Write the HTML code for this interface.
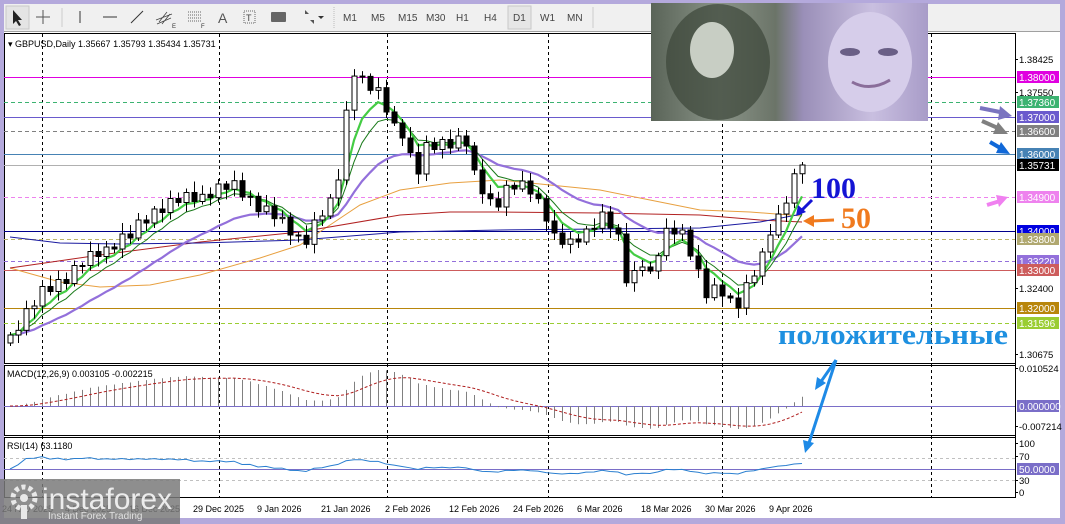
<!DOCTYPE html>
<html><head><meta charset="utf-8">
<style>
html,body{margin:0;padding:0;width:1065px;height:524px;overflow:hidden;background:#b4a9dc;font-family:"Liberation Sans",sans-serif;}
svg{display:block}
</style></head><body>
<svg id="s" width="1065" height="524" xmlns="http://www.w3.org/2000/svg" font-family="Liberation Sans, sans-serif">
<defs>
<linearGradient id="pg" x1="0" x2="1" y1="0" y2="0">
<stop offset="0" stop-color="#5a6458"/><stop offset="0.25" stop-color="#8a9488"/><stop offset="0.45" stop-color="#6b7468"/><stop offset="0.55" stop-color="#9a8fb8"/><stop offset="0.8" stop-color="#c9bfe0"/><stop offset="1" stop-color="#a89cc8"/>
</linearGradient>
</defs>
<rect x="0" y="0" width="1065" height="524" fill="#b4a9dc"/>
<rect x="4" y="4" width="1056" height="27" fill="#f0f0f0"/>
<line x1="4" y1="31.5" x2="1060" y2="31.5" stroke="#a0a0a0"/>
<rect x="6" y="6" width="23" height="23" fill="#e4e4e4" stroke="#c8c8c8"/>
<path d="M13,10 L13,24 L16,21 L19,26 L21,25 L18,20 L22,20 Z" fill="#222"/>
<path d="M36,17 H50 M43,10 V24" stroke="#555" stroke-width="1"/>
<line x1="62" y1="8" x2="62" y2="27" stroke="#ccc"/>
<line x1="80" y1="11" x2="80" y2="23" stroke="#333"/>
<line x1="103" y1="17" x2="117" y2="17" stroke="#333"/>
<line x1="131" y1="23" x2="143" y2="11" stroke="#333"/>
<path d="M159,22 L167,12 M162,24 L170,14 M156,20 L172,14 M157,24 L171,18" stroke="#444" stroke-width="0.8"/><text x="172" y="28" font-size="6" fill="#333">E</text>
<path d="M188,12 H202 M188,15 H202 M188,18 H202 M188,21 H202" stroke="#666" stroke-dasharray="1,1"/><text x="201" y="28" font-size="6" fill="#333">F</text>
<text x="218" y="23" font-size="14" fill="#555">A</text>
<rect x="244" y="11" width="11" height="12" fill="none" stroke="#666" stroke-dasharray="1,1"/><text x="246" y="21" font-size="9" fill="#444">T</text>
<rect x="271" y="12" width="15" height="10" rx="1" fill="#666"/>
<path d="M305,10 L309,14 L305,14 Z M310,20 L314,24 L314,20 Z" fill="#555"/><path d="M318,16 L324,16 L321,19 Z" fill="#333"/>
<line x1="334" y1="7" x2="334" y2="28" stroke="#bbb" stroke-dasharray="1,1"/>
<g font-size="10" fill="#444">
<text x="343" y="21">M1</text><text x="371" y="21">M5</text><text x="398" y="21">M15</text><text x="426" y="21">M30</text><text x="456" y="21">H1</text><text x="484" y="21">H4</text>
<rect x="508" y="6" width="23" height="23" fill="#e6e6e6" stroke="#c8c8c8"/><text x="513" y="21">D1</text>
<text x="540" y="21">W1</text><text x="567" y="21">MN</text>
</g>
<line x1="593" y1="7" x2="593" y2="28" stroke="#ccc"/>
<rect x="4" y="32" width="1056" height="486" fill="#ffffff"/>
<g id="grid"></g>
<rect x="4.5" y="33.5" width="1011" height="330" fill="none" stroke="#000"/>
<rect x="4.5" y="365.5" width="1011" height="70" fill="none" stroke="#000"/>
<rect x="4.5" y="437.5" width="1011" height="60" fill="none" stroke="#000"/>
<g id="hl"></g>
<g id="ma"></g>
<g id="cd"></g>
<g id="ind"></g>
<g id="lbl"></g>
<text x="8" y="47" font-size="9" fill="#000">▾ GBPUSD,Daily  1.35667 1.35793 1.35434 1.35731</text>
<text x="7" y="377" font-size="9" fill="#000">MACD(12,26,9) 0.003105 -0.002215</text>
<text x="7" y="449" font-size="9" fill="#000">RSI(14) 63.1180</text>
<rect x="651" y="3" width="277" height="118" fill="url(#pg)"/>
<ellipse cx="718" cy="62" rx="52" ry="58" fill="#3c4639" opacity="0.7"/>
<ellipse cx="712" cy="50" rx="22" ry="28" fill="#c8cec4"/>
<ellipse cx="870" cy="62" rx="42" ry="50" fill="#d6cdea"/>
<ellipse cx="850" cy="52" rx="10" ry="4" fill="#6a5f86"/><ellipse cx="888" cy="52" rx="10" ry="4" fill="#6a5f86"/>
<path d="M852,82 Q870,92 890,80" stroke="#8a6d9a" stroke-width="3" fill="none"/>
<text x="811" y="198" font-family="Liberation Serif, serif" font-weight="bold" font-size="30" fill="#1414d4">100</text>
<text x="841" y="228" font-family="Liberation Serif, serif" font-weight="bold" font-size="30" fill="#f07a1e">50</text>
<path d="M812,200 L800,212" stroke="#1414d4" stroke-width="3"/><path d="M796,216 L798,205 L806,212 Z" fill="#1414d4"/>
<path d="M834,220 L812,221" stroke="#f07a1e" stroke-width="3"/><path d="M803,221 L814,215 L814,227 Z" fill="#f07a1e"/>
<text x="778" y="344" font-family="Liberation Serif, serif" font-weight="bold" font-size="29" fill="#1e90e0" textLength="230" lengthAdjust="spacingAndGlyphs">положительные</text>
<path d="M836,360 L820,383" stroke="#1e8ae6" stroke-width="3"/><path d="M815,390 L817,377 L826,383 Z" fill="#1e8ae6"/>
<path d="M836,360 L808,446" stroke="#1e8ae6" stroke-width="3"/><path d="M805,453 L803,440 L814,443 Z" fill="#1e8ae6"/>
<path d="M980,108 L1005,113" stroke="#7a74c0" stroke-width="4"/><path d="M1012,116 L1000,106 L998,120 Z" fill="#7a74c0"/>
<path d="M982,121 L1000,129" stroke="#808080" stroke-width="4"/><path d="M1008,134 L998,122 L993,134 Z" fill="#808080"/>
<path d="M990,142 L1002,149" stroke="#1068d8" stroke-width="4"/><path d="M1010,154 L1001,142 L996,153 Z" fill="#1068d8"/>
<path d="M987,205 L1000,201" stroke="#f080f0" stroke-width="4"/><path d="M1008,197 L996,195 L999,207 Z" fill="#f080f0"/>
<g font-size="9" fill="#000" id="tl"></g>
<rect x="0" y="479" width="180" height="45" fill="#7a7a7a" opacity="0.85"/>
<circle cx="24" cy="498" r="11" fill="none" stroke="#e8e8e8" stroke-width="5" stroke-dasharray="4,3"/>
<circle cx="24" cy="498" r="4" fill="#e8e8e8"/>
<rect x="21" y="505" width="6" height="14" fill="#e8e8e8"/>
<text x="42" y="509" font-size="30" fill="#ececec">instaforex</text>
<text x="48" y="519" font-size="10" fill="#e0e0e0">Instant Forex Trading</text>
</svg>
<script>
(function(){
var NS="http://www.w3.org/2000/svg";
function el(p,t,a){var e=document.createElementNS(NS,t);for(var k in a)e.setAttribute(k,a[k]);p.appendChild(e);return e;}
var g=function(id){return document.getElementById(id)};
[42,219,387,548,722,931].forEach(function(x){el(g('grid'),'line',{x1:x+.5,y1:34,x2:x+.5,y2:497,stroke:'#000','stroke-dasharray':'3,3'});});
var L=[[77,'#e000e0',0,'1.38000'],[102,'#3cb371',1,'1.37360'],[117,'#6a5acd',0,'1.37000'],[131,'#808080',1,'1.36600'],[154,'#4682b4',0,'1.36000'],[165,'#b0b0b0',0,'1.35731','#000'],[197,'#ee82ee',1,'1.34900'],[231,'#00008b',0,'1.34000','#0000e0'],[239,'#bdb76b',1,'1.33800','#b0a870'],[261,'#9370db',1,'1.33220'],[270,'#cd5c5c',0,'1.33000'],[308,'#b8860b',0,'1.32000'],[323,'#9acd32',1,'1.31596']];
L.forEach(function(l){var a={x1:4,y1:l[0]+.5,x2:1015,y2:l[0]+.5,stroke:l[1]};if(l[2])a['stroke-dasharray']='4,3';el(g('hl'),'line',a);
 el(g('lbl'),'rect',{x:1017,y:l[0]-6,width:42,height:12,fill:l[4]||l[1]});
 var t=el(g('lbl'),'text',{x:1019,y:l[0]+4,'font-size':10,fill:'#fff'});t.textContent=l[3];});
[[63,'1.38425'],[96,'1.37550'],[292,'1.32400'],[358,'1.30675'],[372,'0.010524'],[430,'-0.007214'],[447,'100'],[460,'70'],[484,'30'],[496,'0']].forEach(function(a){
 el(g('lbl'),'line',{x1:1015,y1:a[0]-3.5,x2:1018,y2:a[0]-3.5,stroke:'#000'});
 var t=el(g('lbl'),'text',{x:1019,y:a[0],'font-size':9.5,fill:'#000'});t.textContent=a[1];});
el(g('lbl'),'rect',{x:1017,y:400,width:42,height:12,fill:'#7a6ec8'});var t0=el(g('lbl'),'text',{x:1019,y:410,'font-size':10,fill:'#fff'});t0.textContent='0.000000';
el(g('lbl'),'rect',{x:1017,y:463,width:42,height:12,fill:'#7a6ec8'});t0=el(g('lbl'),'text',{x:1019,y:473,'font-size':10,fill:'#fff'});t0.textContent='50.0000';
el(g('lbl'),'line',{x1:1015.5,y1:34,x2:1015.5,y2:497,stroke:'#000'});
var K=[[10,335],[40,295],[60,280],[100,250],[130,235],[160,205],[200,195],[230,185],[260,205],[290,230],[305,240],[320,215],[335,200],[345,120],[352,65],[365,85],[380,95],[395,125],[405,135],[415,180],[425,150],[445,140],[465,140],[475,180],[495,205],[510,185],[530,190],[545,210],[555,240],[570,245],[590,225],[605,215],[620,245],[628,290],[640,255],[650,275],[665,235],[680,225],[690,250],[705,295],[720,290],[735,305],[750,280],[760,265],[770,230],[785,200],[797,165],[802,165]];
function interp(x){for(var i=0;i<K.length-1;i++){if(x>=K[i][0]&&x<=K[i+1][0]){var f=(x-K[i][0])/(K[i+1][0]-K[i][0]);return K[i][1]+f*(K[i+1][1]-K[i][1]);}}return K[K.length-1][1];}
var xs=[],cs=[];var noise=[0,6,-5,3,-7,4,-2,8,-4,2,-6,5];
for(var i=0;i<100;i++){var x=10+i*8;xs.push(x);var c=interp(x)+(i<98?noise[i%12]:0);cs.push(c);}
for(var i=0;i<100;i++){var o=i?cs[i-1]:cs[0]+8,c=cs[i],x=xs[i];var hi=Math.min(o,c)-3-(i*7)%9,lo=Math.max(o,c)+3+(i*5)%8;
 el(g('cd'),'line',{x1:x+.5,y1:hi,x2:x+.5,y2:lo,stroke:'#000'});
 var bt=Math.min(o,c),h=Math.max(Math.abs(o-c),1);
 el(g('cd'),'rect',{x:x-2,y:bt,width:5,height:h,fill:c<o?'#fff':'#000',stroke:'#000','stroke-width':1});}
function ema(a,n){var k=2/(n+1),r=[],v=a[0];for(var i=0;i<a.length;i++){v=i?a[i]*k+v*(1-k):a[0];r.push(v);}return r;}
function pl(pts,col,w,p){return el(g(p||'ma'),'polyline',{points:pts.map(function(q){return q[0]+','+q[1]}).join(' '),fill:'none',stroke:col,'stroke-width':w});}
pl([[10,268],[60,282],[100,287],[150,285],[200,275],[260,258],[300,245],[330,225],[360,205],[400,190],[450,183],[500,180],[550,185],[600,190],[650,200],[700,210],[750,212],[802,216]],'#e8a040',1);
pl([[10,268],[100,255],[200,242],[300,232],[400,215],[450,212],[500,212],[600,213],[700,215],[760,220],[802,222]],'#b22222',1);
pl([[10,237],[60,243],[120,244],[200,243],[300,240],[400,232],[500,230],[600,229],[700,228],[760,222],[802,214]],'#1a1aa0',1);
var e20=ema(cs,20),e8=ema(cs,8),e5=ema(cs,5);
pl(xs.map(function(x,i){return [x,e20[i]]}),'#9370db',2.2);
pl(xs.map(function(x,i){return [x,e8[i]]}),'#1a7a1a',1);
pl(xs.map(function(x,i){return [x,e5[i]]}),'#44cc44',2.2);
var p=cs.map(function(c){return -c;});var m12=ema(p,12),m26=ema(p,26);var md=m12.map(function(v,i){return v-m26[i];});
var mx=0;md.forEach(function(v){mx=Math.max(mx,Math.abs(v));});var sc=36/mx;var sg=ema(md,9);
el(g('ind'),'line',{x1:4,y1:406.5,x2:1015,y2:406.5,stroke:'#7a6ec8'});
md.forEach(function(v,i){if(i<2)return;el(g('ind'),'line',{x1:xs[i]+.5,y1:406,x2:xs[i]+.5,y2:406-v*sc,stroke:'#808080'});});
var sl=pl(xs.map(function(x,i){return [x,406-sg[i]*sc]}),'#b02020',1,'ind');sl.setAttribute('stroke-dasharray','3,2');
[458.5,480.5].forEach(function(y){el(g('ind'),'line',{x1:4,y1:y,x2:1015,y2:y,stroke:'#c0c0c0','stroke-dasharray':'3,3'});});
el(g('ind'),'line',{x1:4,y1:469.5,x2:1015,y2:469.5,stroke:'#7a6ec8'});
var ag=0.5,al=0.5,rs=[];for(var i=0;i<100;i++){var d=i?(cs[i-1]-cs[i]):0;var gn=Math.max(d,0),ls=Math.max(-d,0);ag=(ag*13+gn)/14;al=(al*13+ls)/14;var r=100*ag/(ag+al);r=50+(r-50)*0.6;rs.push(r);}
pl(xs.map(function(x,i){return [x,494-rs[i]*0.5]}),'#2a7fd0',1,'ind');
[['24 Nov 2025',2],['4 Dec 2025',65],['16 Dec 2025',129],['29 Dec 2025',193],['9 Jan 2026',257],['21 Jan 2026',321],['2 Feb 2026',385],['12 Feb 2026',449],['24 Feb 2026',513],['6 Mar 2026',577],['18 Mar 2026',641],['30 Mar 2026',705],['9 Apr 2026',769]].forEach(function(a){var t=el(g('tl'),'text',{x:a[1],y:512});t.textContent=a[0];});
})();
</script>
</body></html>
